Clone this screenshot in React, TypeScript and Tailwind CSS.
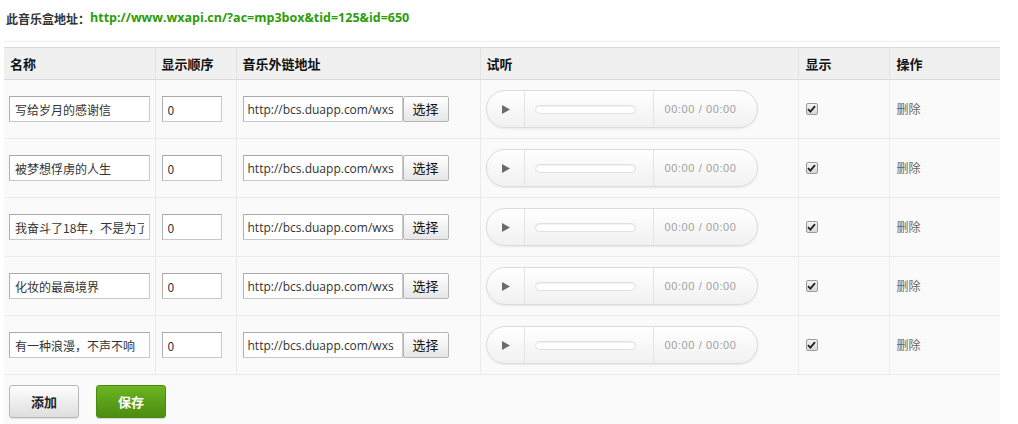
import React from "react";

const rows = [
  "写给岁月的感谢信",
  "被梦想俘虏的人生",
  "我奋斗了18年，不是为了",
  "化妆的最高境界",
  "有一种浪漫，不声不响",
];

const font = "font-['Noto_Sans_CJK_SC','Liberation_Sans',sans-serif]";

function Player() {
  return (
    <div className="flex h-[38px] w-[272px] items-center rounded-full border border-[#dcdcdc] bg-gradient-to-b from-[#ffffff] to-[#f1f1f1] shadow-[0_1px_2px_rgba(0,0,0,0.08)]">
      <div className="flex h-full w-[38px] items-center justify-center border-r border-[#e4e4e4] pl-[2px]">
        <svg width="8" height="9" viewBox="0 0 8 9">
          <path d="M0 0 L8 4.5 L0 9 Z" fill="#6b6b6b" />
        </svg>
      </div>
      <div className="flex h-full w-[129px] items-center border-r border-[#e4e4e4] pl-[10px]">
        <div className="h-[9px] w-[101px] rounded-full border border-[#e0e0e0] bg-white shadow-[inset_0_1px_1px_rgba(0,0,0,0.06)]" />
      </div>
      <div className="flex-1 pl-[11px] text-[11px] tracking-[0.6px] text-[#a0a0a0] font-['Liberation_Sans',sans-serif]">
        00:00 / 00:00
      </div>
    </div>
  );
}

export default function App() {
  return (
    <div className={`min-h-[424px] w-[1018px] bg-white text-[13px] text-[#333] ${font}`}>
      <div className="flex h-[41px] items-center pl-[6px] pb-[4px] text-[12px] font-bold">
        <span className="text-[#333]">此音乐盒地址：</span>
        <span className="text-[#2d9c0a] font-['Open_Sans','Liberation_Sans',sans-serif] text-[12.5px]">
          http://www.wxapi.cn/?ac=mp3box&amp;tid=125&amp;id=650
        </span>
      </div>
      <div className="mx-[4px] w-[996px] border-t border-[#ececec] pt-[5px]">
        <table className="w-full border-collapse">
          <thead>
            <tr className="h-[32px] border-y border-[#dadada] bg-[#f0f0f0] text-left text-[13px] font-bold text-[#111]">
              <th className="w-[151px] border-r border-[#e2e2e2] pl-[6px] font-bold">名称</th>
              <th className="w-[81px] border-r border-[#e2e2e2] pl-[6px] font-bold">显示顺序</th>
              <th className="w-[244px] border-r border-[#e2e2e2] pl-[6px] font-bold">音乐外链地址</th>
              <th className="w-[318px] border-r border-[#e2e2e2] pl-[6px] font-bold">试听</th>
              <th className="w-[91px] border-r border-[#e2e2e2] pl-[7px] font-bold">显示</th>
              <th className="pl-[7px] font-bold">操作</th>
            </tr>
          </thead>
          <tbody>
            {rows.map((name, i) => (
              <tr key={i} className="h-[59px] border-b border-[#ebebeb] bg-[#fafafa]">
                <td className="border-r border-[#ebebeb] pl-[5px]">
                  <input
                    readOnly
                    value={name}
                    className="h-[26px] w-[141px] border border-[#c8c8c8] border-t-[#a8a8a8] border-l-[#b0b0b0] bg-white px-[5px] text-[12px] text-[#333] outline-none"
                  />
                </td>
                <td className="border-r border-[#ebebeb] pl-[6px]">
                  <input
                    readOnly
                    value="0"
                    className="h-[26px] w-[60px] border border-[#c8c8c8] border-t-[#a8a8a8] border-l-[#b0b0b0] bg-white px-[5px] text-[12px] text-[#333] outline-none"
                  />
                </td>
                <td className="border-r border-[#ebebeb] pl-[6px]">
                  <div className="flex items-center">
                    <input
                      readOnly
                      value="http://bcs.duapp.com/wxs"
                      className="h-[26px] w-[160px] border border-[#c8c8c8] border-t-[#a8a8a8] border-l-[#b0b0b0] bg-white px-[4px] text-[12px] text-[#333] outline-none font-['Open_Sans','Liberation_Sans',sans-serif]"
                    />
                    <button className="h-[26px] w-[46px] rounded-[2px] border border-[#b5b5b5] bg-gradient-to-b from-[#ffffff] to-[#e6e6e6] text-[13px] text-[#111]">
                      选择
                    </button>
                  </div>
                </td>
                <td className="border-r border-[#ebebeb] pl-[5px]">
                  <Player />
                </td>
                <td className="border-r border-[#ebebeb] pl-[7px]">
                  <div className="flex h-[12px] w-[12px] items-center justify-center rounded-[2px] border border-[#9a9a9a] bg-gradient-to-b from-[#f4f4f4] to-[#d8d8d8]">
                    <svg width="9" height="8" viewBox="0 0 9 8">
                      <path d="M1 4.2 L3.4 6.6 L8 1.2" stroke="#222" strokeWidth="1.8" fill="none" />
                    </svg>
                  </div>
                </td>
                <td className="pl-[7px] text-[12px] text-[#6e6258]">删除</td>
              </tr>
            ))}
          </tbody>
        </table>
        <div className="flex items-center gap-[17px] bg-[#fafafa] pl-[5px] pt-[10px] pb-[7px]">
          <button className="h-[33px] w-[70px] rounded-[3px] border border-[#b8b8b8] bg-gradient-to-b from-[#fefefe] to-[#dedede] text-[13px] font-bold text-[#222] shadow-[0_1px_1px_rgba(0,0,0,0.1)]">
            添加
          </button>
          <button className="h-[33px] w-[70px] rounded-[3px] border border-[#4a8a12] bg-gradient-to-b from-[#6cb523] to-[#4b8c0e] text-[13px] font-bold text-white shadow-[0_1px_1px_rgba(0,0,0,0.15)]">
            保存
          </button>
        </div>
      </div>
    </div>
  );
}
